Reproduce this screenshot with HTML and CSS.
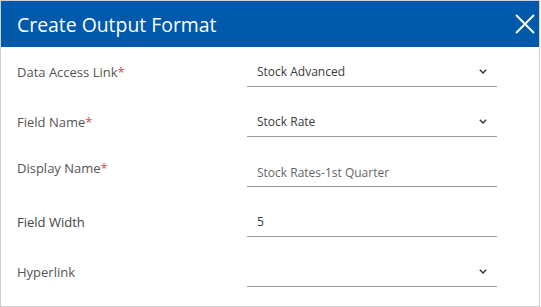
FILE: index.html
```html
<!DOCTYPE html>
<html>
<head>
<meta charset="utf-8">
<link rel="stylesheet" href="styles.css">
</head>
<body>
<div class="dialog">
  <div class="header">
    <h1 class="title">Create Output Format</h1>
    <button class="close" aria-label="Close">
      <svg width="20" height="20" viewBox="0 0 20 20"><path d="M1 1 L19 19 M19 1 L1 19" stroke="#fff" stroke-width="2" fill="none"/></svg>
    </button>
  </div>
  <div class="form">
    <div class="row">
      <div class="label">Data Access Link<span class="req">*</span></div>
      <div class="field"><span class="value">Stock Advanced</span><span class="chev"><svg width="8" height="5" viewBox="0 0 8 5"><path d="M0.8 0.8 L4 4 L7.2 0.8" stroke="#333" stroke-width="1.4" fill="none"/></svg></span></div>
    </div>
    <div class="row">
      <div class="label">Field Name<span class="req">*</span></div>
      <div class="field"><span class="value">Stock Rate</span><span class="chev"><svg width="8" height="5" viewBox="0 0 8 5"><path d="M0.8 0.8 L4 4 L7.2 0.8" stroke="#333" stroke-width="1.4" fill="none"/></svg></span></div>
    </div>
    <div class="row">
      <div class="label label-raised">Display Name<span class="req">*</span></div>
      <div class="field"><span class="value value-muted">Stock Rates-1st Quarter</span></div>
    </div>
    <div class="row">
      <div class="label label-dark">Field Width</div>
      <div class="field"><span class="value">5</span></div>
    </div>
    <div class="row">
      <div class="label">Hyperlink</div>
      <div class="field"><span class="value"></span><span class="chev"><svg width="8" height="5" viewBox="0 0 8 5"><path d="M0.8 0.8 L4 4 L7.2 0.8" stroke="#333" stroke-width="1.4" fill="none"/></svg></span></div>
    </div>
  </div>
</div>
</body>
</html>
```

FILE: styles.css
```css
* { box-sizing: border-box; }
html, body { margin: 0; padding: 0; background: #fff; }
body { font-family: "Open Sans", "Noto Sans", sans-serif; }
.dialog {
  width: 540px;
  height: 307px;
  border: 1px solid #cfcfcf;
  overflow: hidden;
  background: #fff;
}
.header {
  height: 46px;
  background: #0059ab;
  display: flex;
  align-items: center;
  justify-content: space-between;
  padding: 0 4px 0 16px;
}
.title {
  margin: 0;
  font-weight: 400;
  font-size: 19.4px;
  color: #fff;
}
.close {
  background: none;
  border: 0;
  padding: 0;
  width: 20px;
  height: 20px;
  display: flex;
  cursor: pointer;
}
.form { padding: 10px 0 0 16px; }
.row {
  height: 50px;
  display: flex;
  align-items: flex-start;
}
.label {
  width: 230px;
  height: 30px;
  line-height: 30px;
  font-size: 13px;
  color: #555;
}
.label-raised { line-height: 22px; }
.label-dark { color: #444; }
.req { color: #e0474c; }
.field {
  width: 250px;
  height: 30px;
  border-bottom: 1px solid #9a9a9a;
  display: flex;
  align-items: center;
  justify-content: space-between;
  padding: 0 10px 1px 10px;
}
.value { font-size: 12px; color: #3a3a3a; }
.value-muted { color: #666; padding-top: 2px; }
.chev { display: flex; }
```
